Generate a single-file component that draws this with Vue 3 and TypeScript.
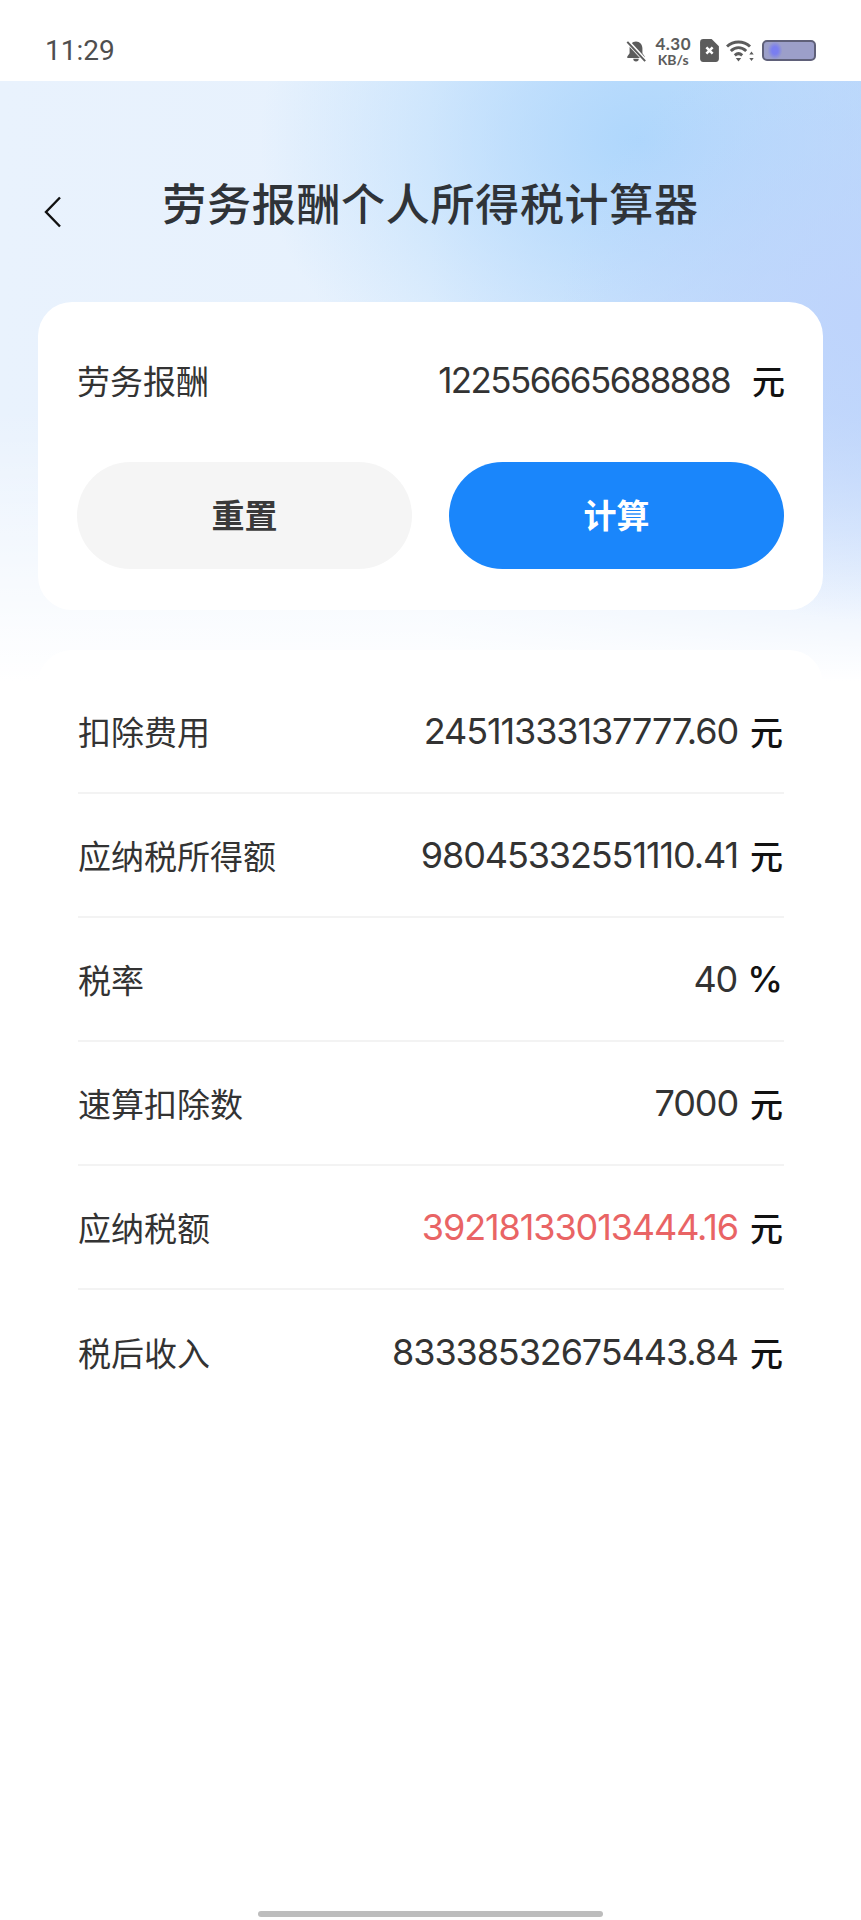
<script setup lang="ts">
interface ResultRow {
  label: string
  value: string
  unit: string
  danger?: boolean
}

const rows: ResultRow[] = [
  { label: '扣除费用', value: '24511333137777.60', unit: '元' },
  { label: '应纳税所得额', value: '98045332551110.41', unit: '元' },
  { label: '税率', value: '40', unit: '%' },
  { label: '速算扣除数', value: '7000', unit: '元' },
  { label: '应纳税额', value: '39218133013444.16', unit: '元', danger: true },
  { label: '税后收入', value: '83338532675443.84', unit: '元' },
]
</script>

<template>
  <div class="page">
    <div class="status-bar">
      <span class="clock">11:29</span>
      <div class="status-icons">
        <svg class="icon-bell" viewBox="0 0 24 24" width="22" height="24">
          <path d="M12 1.500c-4.200 0-7 3.200-7 7.500v5.500L2.500 18v1.500h19V18L19 14.500V9c0-4.300-2.800-7.500-7-7.500z" fill="#5c5c5c" />
          <path d="M9 20.500h6a3 3 0 0 1-6 0z" fill="#5c5c5c" />
          <path d="M4 3 22.500 23" stroke="#fff" stroke-width="4.500" />
          <path d="M2.500 2 22 23" stroke="#5c5c5c" stroke-width="2.200" />
        </svg>
        <div class="speed">
          <span class="speed-num">4.30</span>
          <span class="speed-unit">KB/s</span>
        </div>
        <svg class="icon-sim" viewBox="0 0 18 22" width="19" height="23">
          <path d="M3 0h8l7 7v12a3 3 0 0 1-3 3H3a3 3 0 0 1-3-3V3a3 3 0 0 1 3-3z" fill="#5c5c5c" />
          <path d="M6 8l6 6M12 8l-6 6" stroke="#fff" stroke-width="2.400" />
        </svg>
        <svg class="icon-wifi" viewBox="0 0 28 22" width="28" height="22">
          <path d="M1 6.500C7.500 .5 17.500 .5 24 6.500" fill="none" stroke="#5c5c5c" stroke-width="3" />
          <path d="M4.800 11c4.700-4.200 10.700-4.200 15.400 0" fill="none" stroke="#5c5c5c" stroke-width="3" />
          <path d="M8.800 15.300c2.500-2.200 4.900-2.200 7.400 0" fill="none" stroke="#5c5c5c" stroke-width="3" />
          <path d="M9.800 18h5.400l-2.700 3.500z" fill="#5c5c5c" />
          <path d="M25.500 11.500l2.200 3h-4.400zM25.500 21l-2.200-3h4.400z" fill="#5c5c5c" />
        </svg>
        <div class="battery"><span class="battery-glow"></span></div>
      </div>
    </div>

    <div class="content">
      <header class="nav">
        <svg class="back" viewBox="0 0 20 32" width="20" height="32">
          <path d="M17 1.500 3 16l14 14.500" fill="none" stroke="#111" stroke-width="2.400" />
        </svg>
        <h1 class="title">劳务报酬个人所得税计算器</h1>
      </header>

      <section class="form-card">
        <div class="input-row">
          <span class="label">劳务报酬</span>
          <span class="input-value">122556665688888</span>
          <span class="unit">元</span>
        </div>
        <div class="actions">
          <button class="btn btn-reset" type="button">重置</button>
          <button class="btn btn-submit" type="button">计算</button>
        </div>
      </section>

      <section class="result-panel">
        <div v-for="row in rows" :key="row.label" class="result-row">
          <span class="label">{{ row.label }}</span>
          <span class="result-value">
            <span class="num" :class="{ danger: row.danger }">{{ row.value }}</span>
            <span class="unit" :class="{ percent: row.unit === '%' }">{{ row.unit }}</span>
          </span>
        </div>
      </section>
    </div>

    <div class="home-bar"></div>
  </div>
</template>

<style>
html,
body {
  margin: 0;
  background: #fff;
}
</style>

<style scoped>
.page {
  width: 861px;
  height: 1920px;
  display: flex;
  flex-direction: column;
  overflow: hidden;
  background: #fff;
  font-family: Inter, 'Noto Sans CJK SC', sans-serif;
  color: #333;
}

.status-bar {
  height: 81px;
  flex: none;
  padding: 20px 45px 0 45px;
  display: flex;
  align-items: center;
  justify-content: space-between;
  box-sizing: border-box;
  background: #fff;
}

.clock {
  font-family: Roboto, sans-serif;
  font-size: 28px;
  font-weight: 400;
  color: #4f4f4f;
}

.status-icons {
  display: flex;
  align-items: center;
}

.speed {
  display: flex;
  flex-direction: column;
  align-items: center;
  gap: 1px;
  margin: 0 9px 0 8px;
  font-family: Lato, sans-serif;
  color: #5c5c5c;
  line-height: 1;
}

.speed-num {
  font-size: 17px;
  font-weight: 700;
  letter-spacing: 0.5px;
}

.speed-unit {
  font-size: 14px;
  font-weight: 700;
}

.icon-wifi {
  margin: 0 0 0 7px;
}

.battery {
  width: 54px;
  height: 21px;
  margin-left: 8px;
  box-sizing: border-box;
  border: 2px solid #5f6079;
  border-radius: 5px;
  background: #9c9fc9;
  position: relative;
  overflow: hidden;
}

.battery-glow {
  position: absolute;
  left: 4px;
  top: 0;
  bottom: 0;
  width: 14px;
  background: radial-gradient(ellipse at center, #7a7ef0 30%, rgba(122, 126, 240, 0) 75%);
}

.content {
  flex: 1;
  padding: 0 38px;
  background:
    radial-gradient(ellipse 300px 300px at 860px 240px, rgba(190, 212, 252, 1) 0%, rgba(190, 212, 252, 0) 100%),
    radial-gradient(ellipse 380px 300px at 640px 60px, rgba(170, 213, 252, 0.9) 0%, rgba(170, 213, 252, 0) 100%),
    linear-gradient(180deg, rgba(255, 255, 255, 0) 0%, rgba(255, 255, 255, 0) 55%, #fff 100%),
    linear-gradient(90deg, #e9f2fd 0%, #e6f1fd 50%, #c4dbfb 100%);
  background-size: 100% 600px;
  background-repeat: no-repeat;
}

.nav {
  height: 221px;
  margin: 0 -38px;
  display: flex;
  align-items: flex-start;
  position: relative;
}

.back {
  position: absolute;
  left: 43px;
  top: 115px;
}

.title {
  width: 100%;
  margin: 91px 0 0;
  font-size: 44px;
  font-weight: 500;
  line-height: 66px;
  letter-spacing: 0.7px;
  text-align: center;
  color: #2f3338;
}

.form-card {
  height: 308px;
  box-sizing: border-box;
  padding: 0 39px;
  background: #fff;
  border-radius: 34px;
}

.input-row {
  height: 160px;
  padding-bottom: 4px;
  box-sizing: border-box;
  display: flex;
  align-items: center;
}

.input-row .unit {
  margin-right: -1px;
}

.label {
  font-size: 33px;
  color: #333;
  white-space: nowrap;
}

.input-value {
  margin-left: auto;
  margin-right: 22px;
  font-size: 35px;
  letter-spacing: -1.600px;
  color: #333;
}

.unit {
  font-size: 33px;
  font-weight: 500;
  color: #111;
}

.unit.percent {
  font-size: 36px;
  margin-left: -2px;
}

.actions {
  display: flex;
  justify-content: space-between;
}

.btn {
  width: 335px;
  height: 107px;
  padding: 0 0 4px;
  border: 0;
  border-radius: 54px;
  font-family: inherit;
  font-size: 33px;
  font-weight: 700;
}

.btn-reset {
  background: #f5f5f5;
  color: #3a3a3a;
}

.btn-submit {
  background: #1a86fb;
  color: #fff;
}

.result-panel {
  margin-top: 40px;
  padding: 20px 39px 0 40px;
  background: #fff;
  border-radius: 34px;
}

.result-row {
  height: 124px;
  display: flex;
  align-items: center;
  justify-content: space-between;
  box-sizing: border-box;
  border-bottom: 2px solid #f3f3f3;
}

.result-row:last-child {
  border-bottom: 0;
}

.result-value {
  display: flex;
  align-items: center;
  gap: 12px;
  padding-right: 1px;
}

.num {
  font-size: 36px;
  letter-spacing: -1.100px;
  color: #333;
}

.num.danger {
  color: #e96465;
}

.home-bar {
  position: absolute;
  left: 258px;
  top: 1911px;
  width: 345px;
  height: 6px;
  border-radius: 3px;
  background: #bdbdbd;
}
</style>
